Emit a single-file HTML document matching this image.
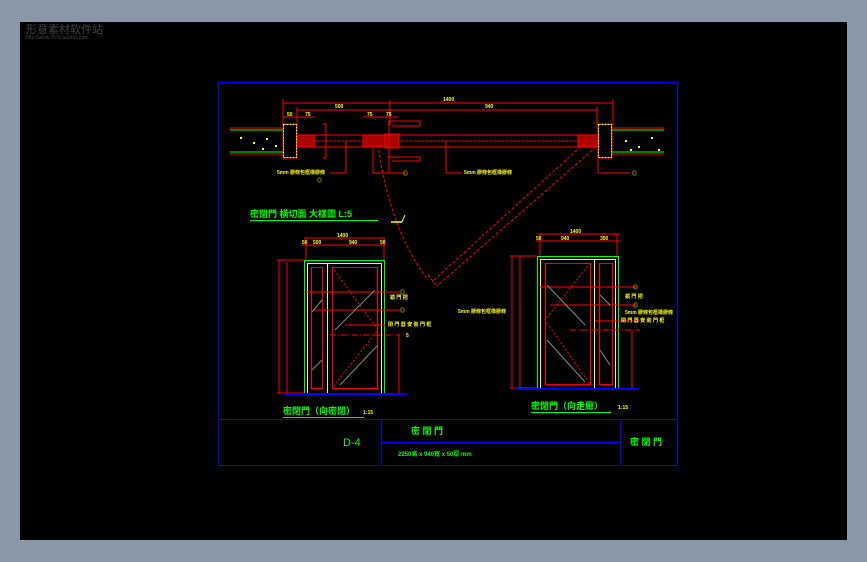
<!DOCTYPE html>
<html><head><meta charset="utf-8"><style>
html,body{margin:0;padding:0;background:#8a97a8;width:867px;height:562px;overflow:hidden}
svg{display:block}
text{font-family:"Liberation Sans","Noto Sans CJK TC",sans-serif;font-weight:bold}
</style></head><body>
<svg width="867" height="562" xmlns="http://www.w3.org/2000/svg">
<rect x="0" y="0" width="867" height="562" fill="#8a97a8"/>
<rect x="20" y="22" width="827" height="518" fill="#000"/>
<text x="26" y="33" font-size="11" fill="#444" style="font-weight:normal">形意素材软件站</text>
<text x="26" y="39" font-size="5" fill="#444" style="font-weight:normal">http://www.7k7k.taobao.com</text>
<!-- frame -->
<rect x="218.5" y="82.5" width="459" height="383" fill="none" stroke="#0000ff" stroke-width="1"/>
<g stroke="#0000ff" stroke-width="1" fill="none">
<line x1="218" y1="419.5" x2="677" y2="419.5"/>
<line x1="381.5" y1="419" x2="381.5" y2="465"/>
<line x1="620.5" y1="419" x2="620.5" y2="465"/>
<line x1="381" y1="442.5" x2="620" y2="442.5" stroke-width="1.5"/>
</g>
<!-- plan section -->
<g stroke="#ff0000" stroke-width="1" fill="none">
<line x1="283" y1="103" x2="613" y2="103"/>
<line x1="297" y1="110" x2="597" y2="110"/>
<line x1="283" y1="99" x2="283" y2="125"/><line x1="613" y1="99" x2="613" y2="125"/>
<line x1="297" y1="107" x2="297" y2="125"/><line x1="597" y1="107" x2="597" y2="125"/>
<line x1="390" y1="100" x2="390" y2="125"/>
<line x1="283" y1="117" x2="315" y2="117"/><line x1="363" y1="117" x2="398" y2="117"/>
<line x1="230" y1="128" x2="283" y2="128"/><line x1="230" y1="154" x2="283" y2="154"/>
<line x1="612" y1="128" x2="664" y2="128"/><line x1="612" y1="154" x2="664" y2="154"/>
<line x1="297" y1="135" x2="600" y2="135"/><line x1="297" y1="147" x2="600" y2="147"/>
<line x1="297" y1="141" x2="600" y2="141" stroke-dasharray="3,1"/>
<rect x="283" y="124" width="14" height="34"/><rect x="598" y="124" width="14" height="34"/>
<rect x="297" y="135" width="18" height="12" fill="#a00"/>
<rect x="363" y="135" width="22" height="12" fill="#a00"/>
<rect x="385" y="134" width="14" height="14" fill="#a00"/>
<rect x="578" y="135" width="20" height="12" fill="#a00"/>
<path d="M388 121 H420 V126 H392"/><path d="M388 157 H420 V161 H392"/>
<line x1="389" y1="121" x2="389" y2="172"/>
<path d="M323 124 H326 V158 H323"/>
<line x1="346" y1="141" x2="346" y2="173"/><line x1="346" y1="173" x2="330" y2="173"/>
<line x1="373" y1="147" x2="373" y2="173"/><line x1="373" y1="173" x2="405" y2="173"/>
<line x1="446" y1="141" x2="446" y2="173"/><line x1="446" y1="173" x2="462" y2="173"/>
<line x1="598" y1="153" x2="598" y2="173"/><line x1="598" y1="173" x2="630" y2="173"/>
<path d="M378 145 Q390 230 428 280" stroke-dasharray="3,2"/>
<line x1="588" y1="140" x2="432" y2="282" stroke-dasharray="3,2"/>
<line x1="596" y1="147" x2="437" y2="286" stroke-dasharray="3,2"/>
<line x1="428" y1="275" x2="437" y2="286" stroke-dasharray="3,2"/>
</g>
<g stroke="#00ff00" stroke-width="1">
<line x1="230" y1="130" x2="283" y2="130"/><line x1="230" y1="152" x2="283" y2="152"/>
<line x1="612" y1="130" x2="664" y2="130"/><line x1="612" y1="152" x2="664" y2="152"/>
</g>
<g fill="#ff0">
<rect x="240" y="137" width="2" height="2"/><rect x="253" y="142" width="2" height="2"/><rect x="266" y="138" width="2" height="2"/><rect x="275" y="145" width="2" height="2"/><rect x="262" y="148" width="2" height="2"/>
<rect x="625" y="140" width="2" height="2"/><rect x="638" y="146" width="2" height="2"/><rect x="651" y="137" width="2" height="2"/><rect x="658" y="149" width="2" height="2"/><rect x="630" y="149" width="2" height="2"/>
</g>
<g stroke="#ff0" stroke-width="1" fill="none" stroke-dasharray="2,1">
<rect x="283.5" y="124.5" width="13" height="33"/><rect x="598.5" y="124.5" width="13" height="33"/>
</g>
<g fill="#ffff00" font-size="5">
<text x="443" y="101">1400</text><text x="335" y="108">500</text><text x="485" y="108">940</text>
<text x="287" y="116">50</text><text x="305" y="116">75</text><text x="367" y="116">75</text><text x="386" y="116">75</text>
<text x="277" y="174">5mm 膠條包框橡膠條</text><text x="464" y="174">5mm 膠條包框橡膠條</text>
<text x="403" y="175">◎</text><text x="317" y="182">◎</text><text x="632" y="175">◎</text>
</g>
<line x1="391" y1="222" x2="402" y2="222" stroke="#ffff00" stroke-width="1.5"/>
<line x1="402" y1="222" x2="405" y2="215" stroke="#ffff00"/>
<text x="250" y="217" font-size="9" fill="#00ff00">密閉門 橫切面 大樣圖 L:5</text>
<line x1="250" y1="220.5" x2="378" y2="220.5" stroke="#00ff00"/>
<!-- left elevation -->
<g fill="none" stroke-width="1">
<line x1="304" y1="238" x2="385" y2="238" stroke="#f00"/>
<line x1="302" y1="245" x2="386" y2="245" stroke="#f00"/>
<line x1="306" y1="238" x2="306" y2="260" stroke="#f00"/><line x1="384" y1="238" x2="384" y2="260" stroke="#f00"/>
<line x1="279" y1="260" x2="279" y2="393" stroke="#f00"/><line x1="287" y1="262" x2="287" y2="393" stroke="#f00"/>
<line x1="277" y1="260" x2="304" y2="260" stroke="#f00"/><line x1="277" y1="393" x2="304" y2="393" stroke="#f00"/>
<rect x="304.5" y="260.5" width="80" height="133" stroke="#0f0"/>
<rect x="307.5" y="263.5" width="74" height="130" stroke="#ff0"/>
<line x1="327.5" y1="263" x2="327.5" y2="393" stroke="#ff0"/>
<rect x="311.5" y="267.5" width="11" height="121" stroke="#f00"/>
<rect x="332.5" y="267.5" width="45" height="121" stroke="#f00"/>
<line x1="306" y1="292" x2="400" y2="292" stroke="#f00"/>
<line x1="314" y1="310" x2="400" y2="310" stroke="#f00"/>
<line x1="345" y1="325" x2="385" y2="325" stroke="#f00"/>
<line x1="330" y1="335" x2="400" y2="335" stroke="#f00" stroke-dasharray="6,2,1,2"/>
<line x1="399" y1="335" x2="399" y2="394" stroke="#f00"/>
<path d="M332 267 L378 330 L332 388" stroke="#f00" stroke-dasharray="2,2"/>
<line x1="340" y1="385" x2="378" y2="345" stroke="#888"/><line x1="335" y1="330" x2="375" y2="290" stroke="#888"/>
<line x1="312" y1="312" x2="322" y2="300" stroke="#888"/><line x1="312" y1="370" x2="322" y2="360" stroke="#888"/>
<line x1="284" y1="394" x2="407" y2="394" stroke="#00f" stroke-width="2"/>
</g>
<g fill="#ffff00" font-size="5">
<text x="337" y="237">1400</text><text x="302" y="244">50</text><text x="313" y="244">500</text><text x="349" y="244">940</text><text x="380" y="244">50</text>
<text x="400" y="294">◎</text><text x="400" y="312">◎</text><text x="390" y="299">鎖 門 把</text>
<text x="388" y="326">閉 門 器 安 裝 門 框</text><text x="406" y="337">5</text>
</g>
<text x="283" y="414" font-size="9" fill="#00ff00">密閉門（向密閉）</text><text x="363" y="414" font-size="5" fill="#ff0">1:15</text>
<line x1="283" y1="417.5" x2="364" y2="417.5" stroke="#0f0"/>
<!-- right elevation -->
<g fill="none" stroke-width="1">
<line x1="538" y1="234" x2="620" y2="234" stroke="#f00"/>
<line x1="536" y1="241" x2="621" y2="241" stroke="#f00"/>
<line x1="540" y1="234" x2="540" y2="256" stroke="#f00"/><line x1="617" y1="234" x2="617" y2="256" stroke="#f00"/>
<line x1="512" y1="256" x2="512" y2="388" stroke="#f00"/><line x1="520" y1="256" x2="520" y2="388" stroke="#f00"/>
<line x1="510" y1="256" x2="537" y2="256" stroke="#f00"/><line x1="510" y1="388" x2="537" y2="388" stroke="#f00"/>
<rect x="537.5" y="256.5" width="81" height="132" stroke="#0f0"/>
<rect x="540.5" y="259.5" width="75" height="129" stroke="#ff0"/>
<line x1="594.5" y1="259" x2="594.5" y2="388" stroke="#ff0"/>
<rect x="545.5" y="263.5" width="45" height="121" stroke="#f00"/>
<rect x="599.5" y="263.5" width="13" height="121" stroke="#f00"/>
<line x1="540" y1="287" x2="636" y2="287" stroke="#f00"/>
<line x1="550" y1="305" x2="636" y2="305" stroke="#f00"/>
<line x1="595" y1="321" x2="640" y2="321" stroke="#f00"/>
<line x1="570" y1="330" x2="640" y2="330" stroke="#f00" stroke-dasharray="6,2,1,2"/>
<line x1="632" y1="330" x2="632" y2="389" stroke="#f00"/>
<path d="M590 263 L545 320 L590 384" stroke="#f00" stroke-dasharray="2,2"/>
<line x1="547" y1="285" x2="585" y2="325" stroke="#888"/><line x1="547" y1="340" x2="585" y2="382" stroke="#888"/>
<line x1="600" y1="295" x2="610" y2="305" stroke="#888"/><line x1="600" y1="350" x2="610" y2="365" stroke="#888"/>
<line x1="516" y1="389" x2="639" y2="389" stroke="#00f" stroke-width="2"/>
</g>
<g fill="#ffff00" font-size="5">
<text x="570" y="233">1400</text><text x="536" y="240">50</text><text x="561" y="240">940</text><text x="600" y="240">350</text>
<text x="633" y="289">◎</text><text x="633" y="307">◎</text><text x="625" y="298">鎖 門 把</text>
<text x="625" y="314">5mm 膠條包框橡膠條</text><text x="621" y="322">閉 門 器 安 裝 門 框</text>
<text x="458" y="313">5mm 膠條包框橡膠條</text>
</g>
<text x="531" y="409" font-size="9" fill="#00ff00">密閉門（向走廊）</text><text x="618" y="409" font-size="5" fill="#ff0">1:15</text>
<line x1="531" y1="412.5" x2="611" y2="412.5" stroke="#0f0"/>
<!-- title block text -->
<text x="343" y="446" font-size="11" fill="#00ff00" style="font-weight:normal">D-4</text>
<text x="411" y="434" font-size="9" fill="#00ff00">密 閉 門</text>
<text x="398" y="456" font-size="6" fill="#00ff00">2250高 x 940寬 x 50厚 mm</text>
<text x="630" y="445" font-size="9" fill="#00ff00">密 閉 門</text>
</svg>
</body></html>
